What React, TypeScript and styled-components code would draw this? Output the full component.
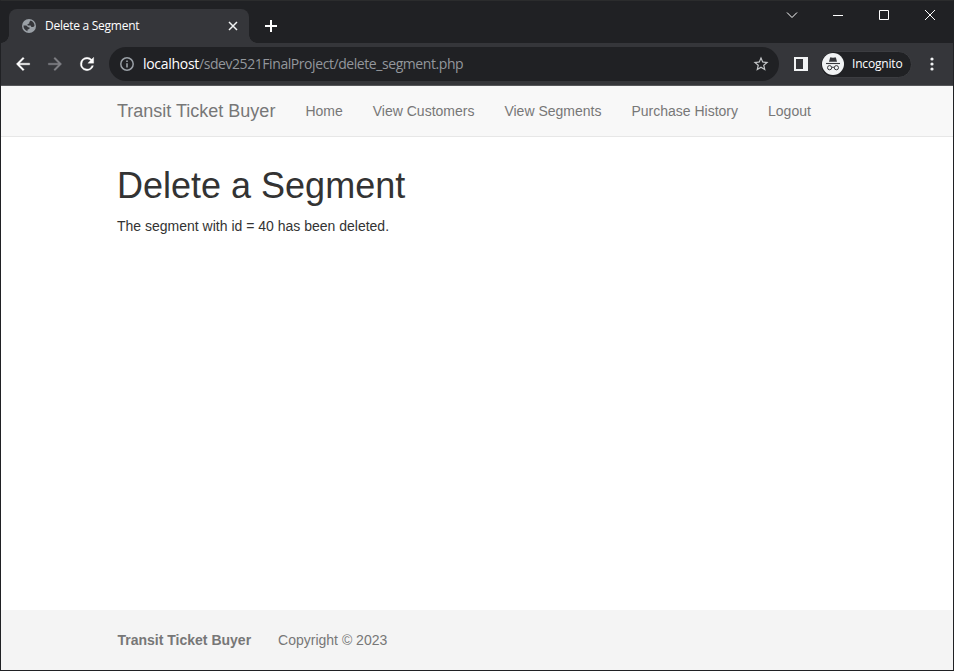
import React from "react";
import styled, { createGlobalStyle } from "styled-components";

const GlobalStyle = createGlobalStyle`
  *, *::before, *::after { box-sizing: border-box; }
  html, body { margin: 0; padding: 0; overflow: hidden; background: #202124; }
`;

const BrowserWindow = styled.div`
  display: flex;
  flex-direction: column;
  width: 954px;
  height: 671px;
  border: 1px solid #202124;
  border-top-color: #2b2c2d;
  background: #fff;
`;

const TitleBar = styled.header`
  display: flex;
  flex: none;
  height: 42px;
  padding: 8px 0 0 8px;
  background: #202124;
`;

const Tab = styled.div`
  position: relative;
  display: flex;
  align-items: center;
  width: 240px;
  height: 34px;
  padding: 0 9px 0 13px;
  border-radius: 8px 8px 0 0;
  background: #35363a;

  &::before, &::after {
    content: "";
    position: absolute;
    bottom: 0;
    width: 8px;
    height: 8px;
  }
  &::before {
    left: -8px;
    background: radial-gradient(circle at 0 0, #202124 7.5px, #35363a 8px);
  }
  &::after {
    right: -8px;
    background: radial-gradient(circle at 100% 0, #202124 7.5px, #35363a 8px);
  }
`;

const uiFont = `"Open Sans", "Noto Sans", sans-serif`;

const TabTitle = styled.span`
  flex: 1;
  margin-left: 9px;
  color: #fff;
  font: 12px/16px ${uiFont};
  letter-spacing: -0.26px;
  white-space: nowrap;
`;

const IconButton = styled.button<{ $w: number; $h: number }>`
  display: flex;
  flex: none;
  align-items: center;
  justify-content: center;
  width: ${(p) => p.$w}px;
  height: ${(p) => p.$h}px;
  padding: 0;
  border: 0;
  background: none;
`;

const NewTab = styled.div`
  margin: 3px 0 0 8px;
`;

const WindowControls = styled.div`
  display: flex;
  margin: -8px 0 0 auto;
`;

const Toolbar = styled.div`
  display: flex;
  flex: none;
  align-items: center;
  height: 43px;
  padding-left: 6px;
  border-bottom: 1px solid #56575a;
  background: #35363a;
`;

const AddressBar = styled.div`
  display: flex;
  flex: none;
  align-items: center;
  width: 670px;
  height: 34px;
  margin: 0 3px 0 6px;
  padding: 0 9px 0 10px;
  border-radius: 17px;
  background: #202124;
`;

const Url = styled.span`
  flex: 1;
  margin-left: 8px;
  color: #93979c;
  font: 14px/20px ${uiFont};
  letter-spacing: -0.43px;
  white-space: nowrap;
`;

const Host = styled.span`
  color: #fff;
  letter-spacing: -0.3px;
`;

const Incognito = styled.div`
  display: flex;
  flex: none;
  align-items: center;
  width: 92px;
  height: 27px;
  padding-left: 1px;
  border: 1px solid #3c3d41;
  border-radius: 14px;
  background: #202124;
  color: #fff;
  font: 12px/16px ${uiFont};
  letter-spacing: -0.18px;
  white-space: nowrap;
`;

const IncognitoLabel = styled.span`
  margin-left: 8px;
`;

const Page = styled.div`
  display: flex;
  flex: 1;
  flex-direction: column;
  color: #333;
  font: 14px/20px "Liberation Sans", Arial, sans-serif;
`;

const NavBar = styled.nav`
  height: 51px;
  border-bottom: 1px solid #e7e7e7;
  background: #f8f8f8;
`;

const Container = styled.div`
  width: 750px;
  margin: 0 auto;
  padding: 0 15px;
`;

const NavRow = styled(Container)`
  display: flex;
  padding: 0;
`;

const NavLink = styled.a<{ $brand?: boolean }>`
  padding: 15px;
  color: #777;
  font-size: ${(p) => (p.$brand ? 18 : 14)}px;
  line-height: 20px;
  white-space: nowrap;
`;

const Content = styled.main`
  flex: 1;
  padding-top: 29px;
`;

const Heading = styled.h1`
  margin: 0 0 10px;
  font-size: 36px;
  font-weight: 500;
  line-height: 39.6px;
`;

const Message = styled.p`
  margin: 0;
`;

const Footer = styled.footer`
  height: 60px;
  padding-top: 20px;
  background: #f4f4f4;
  color: #777;
`;

const FooterRow = styled(Container)`
  display: flex;
  gap: 27px;
  padding-left: 15.5px;
`;

const Globe = () => (
  <svg width="14" height="14" viewBox="0 0 14 14">
    <circle cx="7" cy="7" r="7" fill="#9aa0a6" />
    <path d="M1.5 6.6 4.3 6.6 6.2 8.2 7.6 8.5 7.4 10 5.6 10.4 5.4 12.2C3 11.5 1.3 9.4 1.5 6.6ZM8.6 1.6C10.9 2.3 12.6 4.3 12.5 7L11.2 8 9.4 8 8.6 6.6 5.8 6.4 5.4 5.2 7.2 4.4 7.4 3Z" fill="#35363a" />
  </svg>
);

const CloseTab = () => (
  <svg width="14" height="14" viewBox="0 0 14 14" stroke="#f1f3f4" strokeWidth="1.5">
    <path d="m3 3 8 8M11 3l-8 8" />
  </svg>
);

const Plus = () => (
  <svg width="14" height="14" viewBox="0 0 14 14" fill="#fff">
    <path d="M6 1h2v5h5v2H8v5H6V8H1V6h5Z" />
  </svg>
);

const Arrow = ({ forward = false }: { forward?: boolean }) => (
  <svg width="20" height="20" viewBox="0 0 24 24" fill={forward ? "#808185" : "#fff"}>
    <path
      d={
        forward
          ? "m12 4-1.41 1.41L16.17 11H4v2h12.17l-5.58 5.59L12 20l8-8z"
          : "M20 11H7.83l5.59-5.59L12 4l-8 8 8 8 1.41-1.41L7.83 13H20z"
      }
      stroke={forward ? "#808185" : "#fff"}
      strokeWidth="0.4"
    />
  </svg>
);

const Reload = () => (
  <svg width="20" height="20" viewBox="0 0 24 24" fill="#fff">
    <path
      d="M17.65 6.35A7.96 7.96 0 0 0 12 4a8 8 0 1 0 7.73 10h-2.08A6 6 0 1 1 12 6c1.66 0 3.14.69 4.22 1.78L13 11h7V4z"
      stroke="#fff"
      strokeWidth="0.4"
    />
  </svg>
);

const Info = () => (
  <svg width="16" height="16" viewBox="0 0 16 16">
    <circle cx="8" cy="8" r="6.2" fill="none" stroke="#9aa0a6" strokeWidth="1.5" />
    <path d="M7.2 4.4h1.6V6H7.2zM7.2 7.2h1.6v4.4H7.2z" fill="#9aa0a6" />
  </svg>
);

const Star = () => (
  <svg width="18" height="18" viewBox="0 0 24 24" fill="#c4c7c9">
    <path d="m22 9.24-7.19-.62L12 2 9.19 8.63 2 9.24l5.46 4.73L5.82 21 12 17.27 18.18 21l-1.63-7.03zM12 15.4l-3.76 2.27 1-4.28-3.32-2.88 4.38-.38L12 6.1l1.71 4.04 4.38.38-3.32 2.88 1 4.28z" />
  </svg>
);

const SidePanel = () => (
  <svg width="14" height="14" viewBox="0 0 14 14" fill="#f1f3f4">
    <path fillRule="evenodd" d="M0 0h14v14H0ZM2 2v10h7V2Z" />
  </svg>
);

const Spy = () => (
  <svg width="22" height="22" viewBox="0 0 22 22">
    <circle cx="11" cy="11" r="11" fill="#f1f3f4" />
    <path d="M7 8.8 8 5Q8.3 4.1 9.2 4.4L11 4.8 12.8 4.4Q13.7 4.1 14 5L15 8.8Z" fill="#35363a" />
    <path d="M4 10.5h14" stroke="#35363a" strokeWidth="1.1" />
    <g fill="none" stroke="#35363a" strokeWidth="1">
      <circle cx="7.6" cy="14.7" r="2.1" />
      <circle cx="14.4" cy="14.7" r="2.1" />
      <path d="M9.7 14.5q1.3-.8 2.6 0" />
    </g>
  </svg>
);

const Dots = () => (
  <svg width="4" height="14" viewBox="0 0 4 14" fill="#f1f3f4">
    <circle cx="2" cy="2" r="1.6" />
    <circle cx="2" cy="7" r="1.6" />
    <circle cx="2" cy="12" r="1.6" />
  </svg>
);

const controlPaths = [
  { name: "Search tabs", d: "m1 3.5 5 5 5-5" },
  { name: "Minimize", d: "M1 6.5h10" },
  { name: "Maximize", d: "M1.5 1.5h9v9h-9z" },
  { name: "Close", d: "m1 1 10 10M11 1 1 11" },
];

const links = ["Home", "View Customers", "View Segments", "Purchase History", "Logout"];

export default function App() {
  return (
    <>
      <GlobalStyle />
      <BrowserWindow>
        <TitleBar>
          <Tab>
            <Globe />
            <TabTitle>Delete a Segment</TabTitle>
            <IconButton $w={14} $h={16} aria-label="Close tab"><CloseTab /></IconButton>
          </Tab>
          <NewTab>
            <IconButton $w={28} $h={28} aria-label="New tab"><Plus /></IconButton>
          </NewTab>
          <WindowControls>
            {controlPaths.map((c) => (
              <IconButton key={c.name} $w={46} $h={28} aria-label={c.name}>
                <svg width="12" height="12" viewBox="0 0 12 12" fill="none" stroke="#fff" strokeWidth="1">
                  <path d={c.d} />
                </svg>
              </IconButton>
            ))}
          </WindowControls>
        </TitleBar>
        <Toolbar>
          <IconButton $w={32} $h={28} aria-label="Back"><Arrow /></IconButton>
          <IconButton $w={32} $h={28} aria-label="Forward"><Arrow forward /></IconButton>
          <IconButton $w={32} $h={28} aria-label="Reload"><Reload /></IconButton>
          <AddressBar>
            <Info />
            <Url><Host>localhost</Host>/sdev2521FinalProject/delete_segment.php</Url>
            <Star />
          </AddressBar>
          <IconButton $w={38} $h={28} aria-label="Side panel"><SidePanel /></IconButton>
          <Incognito>
            <Spy />
            <IncognitoLabel>Incognito</IncognitoLabel>
          </Incognito>
          <IconButton $w={39} $h={28} aria-label="Menu"><Dots /></IconButton>
        </Toolbar>
        <Page>
          <NavBar>
            <NavRow>
              <NavLink $brand>Transit Ticket Buyer</NavLink>
              {links.map((l) => <NavLink key={l}>{l}</NavLink>)}
            </NavRow>
          </NavBar>
          <Content>
            <Container>
              <Heading>Delete a Segment</Heading>
              <Message>The segment with id = 40 has been deleted.</Message>
            </Container>
          </Content>
          <Footer>
            <FooterRow>
              <strong>Transit Ticket Buyer</strong>
              <span>Copyright © 2023</span>
            </FooterRow>
          </Footer>
        </Page>
      </BrowserWindow>
    </>
  );
}
